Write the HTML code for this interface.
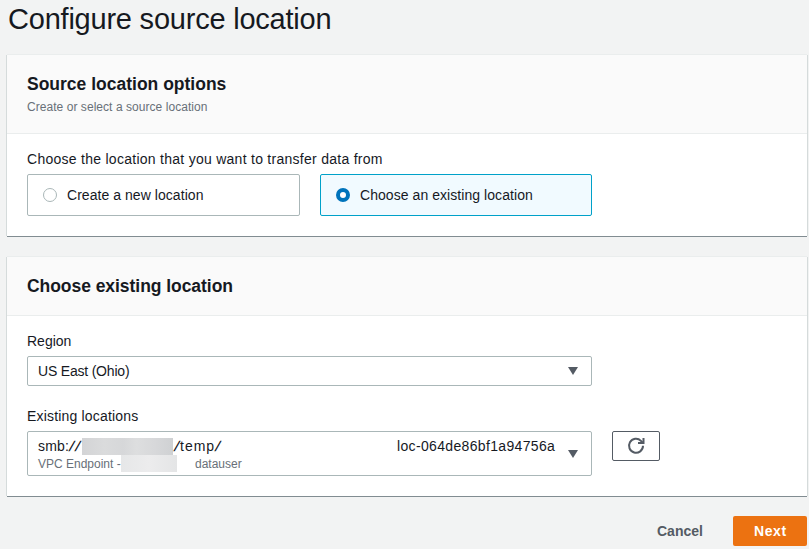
<!DOCTYPE html>
<html><head><meta charset="utf-8">
<style>
*{box-sizing:border-box;margin:0;padding:0}
html,body{width:809px;height:549px;overflow:hidden;background:#f2f3f3;font-family:"Liberation Sans",sans-serif;color:#16191f}
.t{position:absolute;white-space:nowrap;line-height:1}
.card{position:absolute;left:7px;width:800px;background:#fff;border-top:1px solid #eaeded}
.card:before{content:"";position:absolute;left:-1px;top:0;bottom:0;width:1px;background:#d5dbdb}
.card:after{content:"";position:absolute;right:-1px;top:0;bottom:0;width:1px;background:#d5dbdb}
.card .bot{position:absolute;left:0;right:0;bottom:-1px;height:1px;background:#818c91}
.hdr{position:absolute;left:0;right:0;top:0;background:#fafafa;border-bottom:1px solid #eaeded}
.tile{position:absolute;border:1px solid #aab7b8;border-radius:2px;background:#fff}
.tile.sel{border-color:#00a1c9;background:#f1faff}
.radio{position:absolute;width:14px;height:14px;border-radius:50%;border:1px solid #aab7b8;background:#fff}
.radio.on{border:4px solid #0073bb;background:#fff}
.sel-box{position:absolute;border:1px solid #aab7b8;border-radius:2px;background:#fff}
.sl{display:inline-block;width:6px;transform:scaleX(1.3) skewX(-10deg);text-align:center}
.tri{position:absolute;width:0;height:0;border-left:5px solid transparent;border-right:5px solid transparent;border-top:8px solid #545b64}
</style></head><body>
<div class="t" id="title" style="left:8px;top:5px;font-size:29px;letter-spacing:-0.22px">Configure source location</div>

<div class="card" style="top:54px;height:182px">
  <div class="hdr" style="height:79px"></div>
  <div class="bot"></div>
</div>
<div class="t" style="left:27px;top:76px;font-size:17.5px;font-weight:700">Source location options</div>
<div class="t" style="left:27px;top:101px;font-size:12px;color:#687078;letter-spacing:0.05px">Create or select a source location</div>
<div class="t" style="left:27px;top:152px;font-size:14px;letter-spacing:0.27px">Choose the location that you want to transfer data from</div>

<div class="tile" style="left:27px;top:174px;width:273px;height:42px"></div>
<div class="radio" style="left:43px;top:188px"></div>
<div class="t" style="left:67px;top:188px;font-size:14px;letter-spacing:0.05px">Create a new location</div>

<div class="tile sel" style="left:320px;top:174px;width:272px;height:42px"></div>
<div class="radio on" style="left:336px;top:188px"></div>
<div class="t" style="left:360px;top:188px;font-size:14px;letter-spacing:0.06px">Choose an existing location</div>

<div class="card" style="top:256px;height:240px">
  <div class="hdr" style="height:59px"></div>
  <div class="bot"></div>
</div>
<div class="t" style="left:27px;top:278px;font-size:17.5px;font-weight:700;letter-spacing:-0.05px">Choose existing location</div>

<div class="t" style="left:27px;top:334px;font-size:14px">Region</div>
<div class="sel-box" style="left:27px;top:356px;width:565px;height:30px"></div>
<div class="t" style="left:38px;top:364px;font-size:14px;letter-spacing:-0.2px">US East (Ohio)</div>
<div class="tri" style="left:568px;top:367px"></div>

<div class="t" style="left:27px;top:409px;font-size:14px;letter-spacing:0.18px">Existing locations</div>
<div class="sel-box" style="left:27px;top:431px;width:565px;height:45px"></div>
<div class="t" style="left:38px;top:439px;font-size:14px"><span style="letter-spacing:0.15px">smb:</span><span class="sl">/</span><span class="sl">/</span></div>
<div style="position:absolute;left:82px;top:438px;width:91px;height:17px;background:linear-gradient(90deg,#d3d4d6 0%,#dadbdc 25%,#d6d7d9 45%,#dddedf 60%,#d7d8da 80%,#cfd1d3 100%)"></div>
<div class="t" style="left:174px;top:439px;font-size:14px"><span class="sl">/</span><span style="letter-spacing:1px">temp</span><span class="sl">/</span></div>
<div class="t" style="left:397px;top:439px;font-size:14px;letter-spacing:0.34px">loc-064de86bf1a94756a</div>
<div class="t" style="left:38px;top:458px;font-size:12px;color:#687078">VPC Endpoint -</div>
<div style="position:absolute;left:121px;top:455px;width:56px;height:17px;background:linear-gradient(90deg,#e6e7e8 0%,#ececed 50%,#e4e5e6 100%)"></div>
<div class="t" style="left:195px;top:458px;font-size:12px;color:#687078">datauser</div>
<div class="tri" style="left:568px;top:450px"></div>

<div style="position:absolute;left:612px;top:431px;width:48px;height:30px;border:1px solid #545b64;border-radius:2px;background:#fff">
<svg width="46" height="28" viewBox="0 0 46 28" style="position:absolute;left:0;top:0">
<path d="M30 13.8 A7 7 0 1 1 27.95 8.85 L30.3 11.2" fill="none" stroke="#545b64" stroke-width="2"/>
<path d="M30.5 6 V11 H25" fill="none" stroke="#545b64" stroke-width="2"/>
</svg>
</div>

<div class="t" style="left:657px;top:524px;font-size:14px;font-weight:700;color:#545b64">Cancel</div>
<div style="position:absolute;left:733px;top:516px;width:74px;height:30px;background:#ec7211;border-radius:2px"></div>
<div class="t" style="left:754px;top:524px;font-size:14px;font-weight:700;color:#fff;letter-spacing:0.6px">Next</div>
</body></html>
